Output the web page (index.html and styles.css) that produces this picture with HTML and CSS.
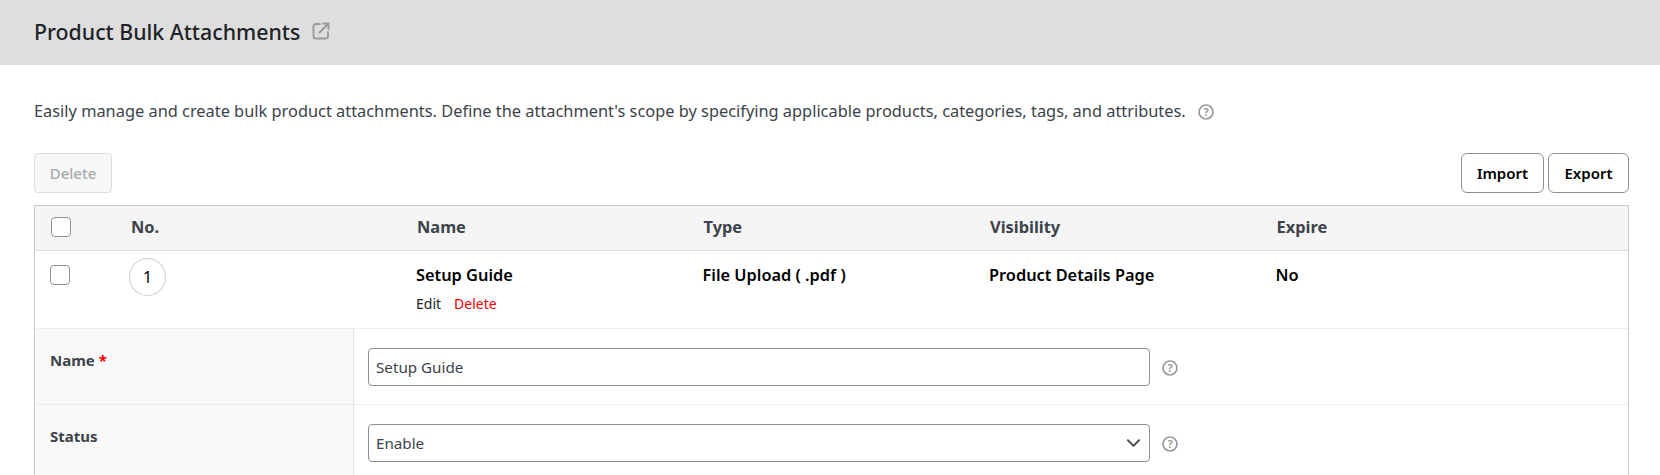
FILE: index.html
```html
<!DOCTYPE html>
<html lang="en">
<head>
<meta charset="utf-8">
<title>Product Bulk Attachments</title>
<link rel="stylesheet" href="styles.css">
</head>
<body>
<header class="page-header">
  <h1 class="page-title">Product Bulk Attachments</h1>
  <svg class="ext-icon" viewBox="0 0 18 18" fill="none" stroke="#9a9a9a" stroke-width="1.800" stroke-linecap="round" stroke-linejoin="round">
    <path d="M8 2H3.500A2 2 0 0 0 1.500 4v10.500a2 2 0 0 0 2 2H14a2 2 0 0 0 2-2V10"/>
    <path d="M7.500 10.500 16 2M11 1.500h5.500V7"/>
  </svg>
</header>
<main class="content">
  <p class="intro">
    <span>Easily manage and create bulk product attachments. Define the attachment's scope by specifying applicable products, categories, tags, and attributes.</span>
    <svg class="help" viewBox="0 0 16 16"><circle cx="8" cy="8" r="7" fill="none" stroke="#9a9a9a" stroke-width="1.700"/><text x="8" y="11.500" text-anchor="middle" class="help-mark">?</text></svg>
  </p>
  <div class="toolbar">
    <button class="btn btn-disabled" type="button">Delete</button>
    <div class="toolbar-right">
      <button class="btn btn-outline btn-import" type="button">Import</button>
      <button class="btn btn-outline btn-export" type="button">Export</button>
    </div>
  </div>
  <section class="table">
    <div class="row row-head">
      <div class="cell-check"><span class="check check-head"></span></div>
      <div class="cell-no">No.</div>
      <div class="cell">Name</div>
      <div class="cell">Type</div>
      <div class="cell">Visibility</div>
      <div class="cell">Expire</div>
    </div>
    <div class="row row-item">
      <div class="cell-check"><span class="check"></span></div>
      <div class="cell-no"><span class="badge">1</span></div>
      <div class="cell cell-name">
        <div>Setup Guide</div>
        <div class="actions"><a class="edit">Edit</a><a class="del">Delete</a></div>
      </div>
      <div class="cell">File Upload ( .pdf )</div>
      <div class="cell">Product Details Page</div>
      <div class="cell">No</div>
    </div>
    <div class="form-row">
      <div class="form-label">Name <span class="req">*</span></div>
      <div class="form-field">
        <div class="control">Setup Guide</div>
        <svg class="help" viewBox="0 0 16 16"><circle cx="8" cy="8" r="7" fill="none" stroke="#9a9a9a" stroke-width="1.700"/><text x="8" y="11.500" text-anchor="middle" class="help-mark">?</text></svg>
      </div>
    </div>
    <div class="form-row">
      <div class="form-label">Status</div>
      <div class="form-field">
        <div class="control control-select">Enable
          <svg class="chev" viewBox="0 0 16 10" fill="none" stroke="#444" stroke-width="2" stroke-linecap="round" stroke-linejoin="round"><path d="M2 2l6 6 6-6"/></svg>
        </div>
        <svg class="help" viewBox="0 0 16 16"><circle cx="8" cy="8" r="7" fill="none" stroke="#9a9a9a" stroke-width="1.700"/><text x="8" y="11.500" text-anchor="middle" class="help-mark">?</text></svg>
      </div>
    </div>
  </section>
</main>
</body>
</html>
```
FILE: styles.css
```css
* { box-sizing: border-box; }
html, body { margin: 0; height: 475px; overflow: hidden; }
body { background: #fff; font-family: "Noto Sans", "Open Sans", sans-serif; font-size: 15px; color: #3c434a; }
.page-header { height: 65px; background: #dedede; display: flex; align-items: center; padding: 0 0 3px 34px; gap: 12px; }
.page-title { margin: 0; font-size: 21.3px; font-weight: 500; color: #1d2327; }
.ext-icon { width: 18px; height: 18px; }
.content { padding: 0 31px 0 34px; }
.intro { margin: 0; height: 88px; padding-top: 35px; display: flex; gap: 12px; font-size: 16.38px; line-height: 22px; align-items: flex-start; color: #3c434a; }
.help { width: 16px; height: 16px; flex: none; margin-top: 4px; }
.help-mark { font-size: 11px; font-weight: 700; fill: #9a9a9a; font-family: "Noto Sans", sans-serif; }
.toolbar { display: flex; justify-content: space-between; height: 40px; margin-bottom: 12px; }
.toolbar-right { display: flex; gap: 4px; }
.btn { font: inherit; height: 40px; border-radius: 4px; background: #fff; font-weight: 600; padding: 0; }
.btn-disabled { width: 78px; background: #f6f7f7; border: 1px solid #dcdcde; color: #a7aaad; font-weight: 500; }
.btn-outline { border: 1px solid #8c8f94; color: #000; border-radius: 6px; }
.btn-import { width: 83px; }
.btn-export { width: 81px; }
.table { border: 1px solid #c9c9cc; border-bottom: 0; height: 270px; }
.row { display: grid; grid-template-columns: 95px 286px 286.5px 286.5px 286.5px 1fr; }
.row-head { height: 45px; background: #f5f5f5; border-bottom: 1px solid #dcdcde; align-items: center; font-weight: 700; font-size: 16.4px; color: #3c434a; padding-bottom: 3px; }
.row-head .cell, .row-head .cell-no { padding-left: 1px; }
.row-item { height: 78px; border-bottom: 1px solid #eee; font-weight: 600; font-size: 16.35px; line-height: 22px; color: #000; padding-top: 13px; }
.cell-check { padding-left: 16px; }
.row-item .cell-check { padding-left: 15px; padding-top: 1px; }
.check { display: block; width: 20px; height: 20px; border: 1px solid #8c8f94; border-radius: 4px; background: #fff; }
.row-item .cell-no { margin-top: -6px; margin-left: -1px; }
.badge { display: flex; width: 37px; height: 38px; border: 1px solid #ccc; border-radius: 50%; align-items: center; justify-content: center; font-weight: 400; font-size: 16px; color: #000; }
.actions { display: flex; gap: 13px; font-size: 14px; font-weight: 400; margin-top: 8px; line-height: 20px; }
.edit { color: #1d2327; }
.del { color: #f00; }
.form-row { display: grid; grid-template-columns: 319px 1fr; height: 76px; border-bottom: 1px solid #eee; }
.form-label { background: #f9f9f9; border-right: 1px solid #e6e6e6; padding: 21px 15px 0; font-weight: 700; font-size: 15px; color: #3c434a; }
.req { color: #f00; }
.form-field { display: flex; align-items: flex-start; gap: 12px; padding: 19px 14px 18px; }
.control { width: 782px; height: 38px; border: 1px solid #8c8f94; border-radius: 4px; padding: 0 7px; display: flex; align-items: center; justify-content: space-between; font-size: 15.2px; color: #3c434a; }
.form-field .help { margin-top: 11.5px; }
.chev { width: 15px; height: 10px; margin-right: 1px; }
```
